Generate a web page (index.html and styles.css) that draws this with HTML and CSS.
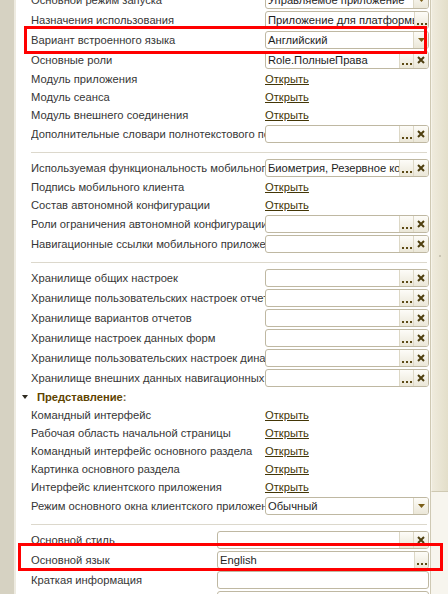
FILE: index.html
```html
<!DOCTYPE html>
<html lang="ru">
<head>
<meta charset="utf-8">
<title>Свойства конфигурации</title>
<link rel="stylesheet" href="styles.css">
</head>
<body>
<div class="window">
  <div class="leftstrip"></div>
  <div class="panel">
    <div class="list">
      <div class="row">
        <div class="label">Основной режим запуска</div>
        <div class="field"><span class="val">Управляемое приложение</span><span class="btn drop"><svg width="7" height="4" viewBox="0 0 7 4"><path d="M0 0h7L3.5 4z"/></svg></span></div>
      </div>
      <div class="row">
        <div class="label">Назначения использования</div>
        <div class="field"><span class="val">Приложение для платформы 8.3</span><span class="btn dots"><i></i><i></i><i></i></span></div>
      </div>
      <div class="row">
        <div class="label">Вариант встроенного языка</div>
        <div class="field"><span class="val">Английский</span><span class="btn drop"><svg width="7" height="4" viewBox="0 0 7 4"><path d="M0 0h7L3.5 4z"/></svg></span></div>
      </div>
      <div class="row">
        <div class="label">Основные роли</div>
        <div class="field"><span class="val">Role.ПолныеПрава</span><span class="btn dots"><i></i><i></i><i></i></span><span class="btn clear"><svg width="8" height="8" viewBox="0 0 8 8"><path d="M1 1l6 6M7 1L1 7"/></svg></span></div>
      </div>
      <div class="row link-row">
        <div class="label">Модуль приложения</div>
        <a class="open" href="#">Открыть</a>
      </div>
      <div class="row link-row">
        <div class="label">Модуль сеанса</div>
        <a class="open" href="#">Открыть</a>
      </div>
      <div class="row link-row">
        <div class="label">Модуль внешнего соединения</div>
        <a class="open" href="#">Открыть</a>
      </div>
      <div class="row">
        <div class="label">Дополнительные словари полнотекстового поиска</div>
        <div class="field"><span class="val"></span><span class="btn dots"><i></i><i></i><i></i></span><span class="btn clear"><svg width="8" height="8" viewBox="0 0 8 8"><path d="M1 1l6 6M7 1L1 7"/></svg></span></div>
      </div>
      <div class="sep"></div>
      <div class="row">
        <div class="label">Используемая функциональность мобильного приложения</div>
        <div class="field"><span class="val">Биометрия, Резервное копирование</span><span class="btn dots"><i></i><i></i><i></i></span><span class="btn clear"><svg width="8" height="8" viewBox="0 0 8 8"><path d="M1 1l6 6M7 1L1 7"/></svg></span></div>
      </div>
      <div class="row link-row">
        <div class="label">Подпись мобильного клиента</div>
        <a class="open" href="#">Открыть</a>
      </div>
      <div class="row link-row">
        <div class="label">Состав автономной конфигурации</div>
        <a class="open" href="#">Открыть</a>
      </div>
      <div class="row">
        <div class="label">Роли ограничения автономной конфигурации</div>
        <div class="field"><span class="val"></span><span class="btn dots"><i></i><i></i><i></i></span><span class="btn clear"><svg width="8" height="8" viewBox="0 0 8 8"><path d="M1 1l6 6M7 1L1 7"/></svg></span></div>
      </div>
      <div class="row">
        <div class="label">Навигационные ссылки мобильного приложения</div>
        <div class="field"><span class="val"></span><span class="btn dots"><i></i><i></i><i></i></span><span class="btn clear"><svg width="8" height="8" viewBox="0 0 8 8"><path d="M1 1l6 6M7 1L1 7"/></svg></span></div>
      </div>
      <div class="sep"></div>
      <div class="row">
        <div class="label">Хранилище общих настроек</div>
        <div class="field"><span class="val"></span><span class="btn dots"><i></i><i></i><i></i></span><span class="btn clear"><svg width="8" height="8" viewBox="0 0 8 8"><path d="M1 1l6 6M7 1L1 7"/></svg></span></div>
      </div>
      <div class="row">
        <div class="label">Хранилище пользовательских настроек отчетов</div>
        <div class="field"><span class="val"></span><span class="btn dots"><i></i><i></i><i></i></span><span class="btn clear"><svg width="8" height="8" viewBox="0 0 8 8"><path d="M1 1l6 6M7 1L1 7"/></svg></span></div>
      </div>
      <div class="row">
        <div class="label">Хранилище вариантов отчетов</div>
        <div class="field"><span class="val"></span><span class="btn dots"><i></i><i></i><i></i></span><span class="btn clear"><svg width="8" height="8" viewBox="0 0 8 8"><path d="M1 1l6 6M7 1L1 7"/></svg></span></div>
      </div>
      <div class="row">
        <div class="label">Хранилище настроек данных форм</div>
        <div class="field"><span class="val"></span><span class="btn dots"><i></i><i></i><i></i></span><span class="btn clear"><svg width="8" height="8" viewBox="0 0 8 8"><path d="M1 1l6 6M7 1L1 7"/></svg></span></div>
      </div>
      <div class="row">
        <div class="label">Хранилище пользовательских настроек динамических списков</div>
        <div class="field"><span class="val"></span><span class="btn dots"><i></i><i></i><i></i></span><span class="btn clear"><svg width="8" height="8" viewBox="0 0 8 8"><path d="M1 1l6 6M7 1L1 7"/></svg></span></div>
      </div>
      <div class="row">
        <div class="label">Хранилище внешних данных навигационных ссылок</div>
        <div class="field"><span class="val"></span><span class="btn dots"><i></i><i></i><i></i></span><span class="btn clear"><svg width="8" height="8" viewBox="0 0 8 8"><path d="M1 1l6 6M7 1L1 7"/></svg></span></div>
      </div>
      <div class="group-head">
        <svg class="caret" width="6" height="4" viewBox="0 0 6 4"><path d="M0 0h6L3 4z"/></svg>
        <span class="group-title">Представление</span><span class="colon">:</span>
      </div>
      <div class="row link-row">
        <div class="label">Командный интерфейс</div>
        <a class="open" href="#">Открыть</a>
      </div>
      <div class="row link-row">
        <div class="label">Рабочая область начальной страницы</div>
        <a class="open" href="#">Открыть</a>
      </div>
      <div class="row link-row">
        <div class="label">Командный интерфейс основного раздела</div>
        <a class="open" href="#">Открыть</a>
      </div>
      <div class="row link-row">
        <div class="label">Картинка основного раздела</div>
        <a class="open" href="#">Открыть</a>
      </div>
      <div class="row link-row">
        <div class="label">Интерфейс клиентского приложения</div>
        <a class="open" href="#">Открыть</a>
      </div>
      <div class="row">
        <div class="label">Режим основного окна клиентского приложения</div>
        <div class="field"><span class="val">Обычный</span><span class="btn drop"><svg width="7" height="4" viewBox="0 0 7 4"><path d="M0 0h7L3.5 4z"/></svg></span></div>
      </div>
      <div class="sep"></div>
      <div class="row narrow">
        <div class="label">Основной стиль</div>
        <div class="field"><span class="val"></span><span class="btn dots"><i></i><i></i><i></i></span><span class="btn clear"><svg width="8" height="8" viewBox="0 0 8 8"><path d="M1 1l6 6M7 1L1 7"/></svg></span></div>
      </div>
      <div class="row narrow">
        <div class="label">Основной язык</div>
        <div class="field"><span class="val">English</span><span class="btn dots"><i></i><i></i><i></i></span></div>
      </div>
      <div class="row narrow">
        <div class="label">Краткая информация</div>
        <div class="field"><span class="val"></span></div>
      </div>
      <div class="row narrow">
        <div class="label">Подробная информация</div>
        <div class="field"><span class="val"></span></div>
      </div>
    </div>
  </div>
  <div class="scrollbar">
    <div class="thumb"><span class="grip"></span></div>
    <div class="track"></div>
  </div>
  <div class="mark mark-top"></div>
  <div class="mark mark-bottom"></div>
</div>
</body>
</html>
```

FILE: styles.css
```css
html, body {
  margin: 0;
  padding: 0;
  background: #ffffff;
}

.window {
  position: relative;
  display: flex;
  width: 448px;
  height: 594px;
  overflow: hidden;
  font-family: "Liberation Sans", Arial, sans-serif;
  font-size: 11.2px;
  color: #363636;
}

.leftstrip {
  width: 14px;
  flex-shrink: 0;
  background: #d6d2c2;
  border-right: 2px solid #eeebe1;
}

.panel {
  flex: 1;
  background: #ffffff;
  overflow: hidden;
}

.list {
  margin-top: -10px;
}

.row {
  display: flex;
  align-items: center;
  height: 20px;
  padding-left: 15px;
}

.link-row {
  height: 18px;
}

.label {
  width: 234px;
  flex-shrink: 0;
  white-space: nowrap;
  overflow: hidden;
  line-height: 16px;
}

.narrow .label {
  width: 186px;
}

.field {
  display: flex;
  box-sizing: border-box;
  width: 164px;
  height: 18px;
  flex-shrink: 0;
  border: 1px solid #bfb8a2;
  border-radius: 3px;
  background: #ffffff;
  overflow: hidden;
}

.narrow .field {
  width: 212px;
}

.val {
  flex: 1;
  min-width: 0;
  padding-left: 2px;
  white-space: nowrap;
  overflow: hidden;
  line-height: 16px;
  color: #1e1e1e;
}

.btn {
  width: 14px;
  flex-shrink: 0;
  display: flex;
  align-items: center;
  justify-content: center;
  border-left: 1px solid #ddd8c6;
  background: linear-gradient(#fdfcf8, #ebe7d8);
}

.drop svg {
  fill: #7a5e18;
}

.dots {
  align-items: flex-end;
  gap: 2px;
  padding-bottom: 3px;
  box-sizing: border-box;
}

.dots i {
  display: block;
  width: 2px;
  height: 2px;
  background: #5c4a14;
}

.clear svg {
  stroke: #4e3f10;
  stroke-width: 2;
  fill: none;
}

.open {
  color: #433606;
  text-decoration: underline;
  line-height: 16px;
}

.sep {
  height: 1px;
  background: #dcd8cc;
  margin: 8px 3px 5px 15px;
}

.group-head {
  display: flex;
  align-items: center;
  height: 18px;
  padding-left: 6px;
  font-weight: bold;
  color: #5e4300;
}

.caret {
  fill: #2e2a20;
  margin-right: 9px;
}

.colon {
  color: #7a6a40;
}

.scrollbar {
  width: 17px;
  flex-shrink: 0;
  display: flex;
  flex-direction: column;
  border-left: 1px solid #cfc9b4;
  background: #f7f5ee;
}

.thumb {
  height: 492px;
  flex-shrink: 0;
  box-sizing: border-box;
  border-bottom: 1px solid #cfc9b2;
  border-left: 1px solid #f6f4ea;
  background: linear-gradient(to right, #efebdd, #e3dec9);
  display: flex;
  align-items: center;
  justify-content: center;
}

.grip {
  width: 2px;
  height: 2px;
  background: #c9c4b2;
  margin-top: 20px;
}

.track {
  flex: 1;
}

.mark {
  position: absolute;
  box-sizing: border-box;
  border: 3px solid #ff0000;
  pointer-events: none;
}

.mark-top {
  left: 24px;
  top: 26px;
  width: 403px;
  height: 28px;
}

.mark-bottom {
  left: 18px;
  top: 543px;
  width: 425px;
  height: 28px;
}
```
